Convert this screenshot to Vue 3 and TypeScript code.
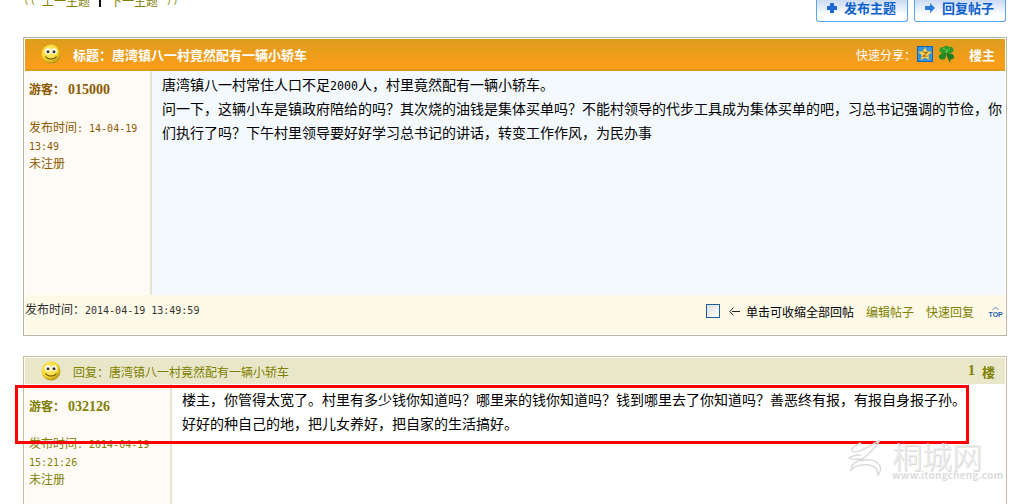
<script setup lang="ts">
const navLinks = ['上一主题', '下一主题']
const actions = [
  { label: '发布主题', icon: 'plus' },
  { label: '回复帖子', icon: 'arrow' },
]
</script>

<template>
  <div class="page">
    <div class="topbar">
      <div class="nav">
        <span class="chev">((</span>
        <a>{{ navLinks[0] }}</a>
        <span class="sep"></span>
        <a>{{ navLinks[1] }}</a>
        <span class="chev">))</span>
      </div>
      <div class="actions">
        <button v-for="a in actions" :key="a.label" class="btn">
          <svg width="12" height="12" viewBox="0 0 12 12">
            <path v-if="a.icon === 'plus'" d="M4 1h4v3h3v4H8v3H4V8H1V4h3z" fill="#1b68dc" />
            <path v-else d="M1 4h5V1l5 5-5 5V8H1z" fill="#2a7bdc" />
          </svg>
          <span>{{ a.label }}</span>
        </button>
      </div>
    </div>

    <section class="card first">
      <header class="head orange">
        <svg class="smile" width="20" height="20" viewBox="0 0 20 20">
          <defs>
            <radialGradient id="sm1" cx="42%" cy="38%" r="65%">
              <stop offset="0" stop-color="#fff58e" />
              <stop offset="0.65" stop-color="#f7d62c" />
              <stop offset="1" stop-color="#a98a14" />
            </radialGradient>
          </defs>
          <circle cx="10" cy="10" r="9.5" fill="url(#sm1)" />
          <ellipse cx="6.8" cy="7.2" rx="2.8" ry="3" fill="#fff" />
          <ellipse cx="13.2" cy="7.2" rx="2.8" ry="3" fill="#fff" />
          <circle cx="7" cy="7.8" r="1.5" fill="#3a3320" />
          <circle cx="13" cy="7.8" r="1.5" fill="#3a3320" />
          <path d="M4.5 12.5c2 3.4 9 3.4 11 0" fill="none" stroke="#6d5208" stroke-width="1.1" />
        </svg>
        <h2 class="title">标题：唐湾镇八一村竟然配有一辆小轿车</h2>
        <div class="share">
          <span class="share-label">快速分享：</span>
          <svg class="qz" width="16" height="16" viewBox="0 0 16 16">
            <rect x="0.5" y="0.5" width="15" height="15" fill="#2f93e6" stroke="#1565b4" />
            <path d="M8 1.2l2 4.2 4.6.6-3.4 3.1.9 4.6L8 11.5l-4.1 2.2.9-4.6L1.4 6l4.6-.6z" fill="#fbdc5a" stroke="#e0a92a" stroke-width="0.6" />
            <path d="M5.8 6.4h4.4L6 10.2h4.4" fill="none" stroke="#b5701a" stroke-width="1.2" />
          </svg>
          <svg width="17" height="18" viewBox="0 0 17 18">
            <path d="M8.5 8C5 9 2 8 1.5 5.5S4 1 6 2.5c0-2 4-2.5 4.8-.2C13 .8 16 3 15.5 5.5S12 9 8.5 8z" fill="#2f9a2a" />
            <path d="M8.5 8C5 7.5 1 9 .8 11.5s3 4 5 2.8c1.2 1 2.2-1.8 2.7-6.3z" fill="#248a24" />
            <path d="M8.5 8c3 .2 7.5 1 7.7 3.5s-3 4-5 2.8C9.5 14 8.8 11 8.5 8z" fill="#1f7f20" />
            <path d="M5 3.5c1.5-.5 3 1 3.5 4M11.5 3.5C10 4 9 5.5 8.5 8" fill="none" stroke="#6fd456" stroke-width="1" />
            <path d="M9 9l3 8" stroke="#2b6f1f" stroke-width="1.3" />
          </svg>
          <b class="floor">楼主</b>
        </div>
      </header>
      <div class="row tall">
        <aside class="side side-a">
          <div class="user">游客：<span class="num">015000</span></div>
          <div>发布时间<span class="mono">: 14-04-19 13:49</span></div>
          <div>未注册</div>
        </aside>
        <div class="content blue">
          <p>唐湾镇八一村常住人口不足<span class="mono14">2000</span>人，村里竟然配有一辆小轿车。</p>
          <p>问一下，这辆小车是镇政府陪给的吗？其次烧的油钱是集体买单吗？不能村领导的代步工具成为集体买单的吧，习总书记强调的节俭，你们执行了吗？下午村里领导要好好学习总书记的讲话，转变工作作风，为民办事</p>
        </div>
      </div>
      <footer class="foot">
        <div class="time">发布时间：<span class="mono">2014-04-19 13:49:59</span></div>
        <div class="tools">
          <i class="check"></i>
          <span class="hint">
            <svg width="11" height="9" viewBox="0 0 11 9">
              <path d="M4.5 .5L.8 4.5l3.7 4M3 4.5h8" fill="none" stroke="#222" stroke-width="1" />
            </svg>
            单击可收缩全部回帖
          </span>
          <a>编辑帖子</a>
          <a>快速回复</a>
          <svg class="top" width="15" height="11" viewBox="0 0 15 11">
            <path d="M4.5 4l3-3 3 3" fill="none" stroke="#5f8ec8" stroke-width="1" />
            <text x="0.5" y="10.5" font-size="7" font-weight="700" fill="#1c5fb0" font-family="Liberation Sans, sans-serif">TOP</text>
          </svg>
        </div>
      </footer>
    </section>

    <section class="card second">
      <header class="head olive">
        <svg class="smile" width="20" height="20" viewBox="0 0 20 20">
          <defs>
            <radialGradient id="sm2" cx="42%" cy="38%" r="65%">
              <stop offset="0" stop-color="#fff58e" />
              <stop offset="0.65" stop-color="#f7d62c" />
              <stop offset="1" stop-color="#a98a14" />
            </radialGradient>
          </defs>
          <circle cx="10" cy="10" r="9.5" fill="url(#sm2)" />
          <ellipse cx="6.8" cy="7.2" rx="2.8" ry="3" fill="#fff" />
          <ellipse cx="13.2" cy="7.2" rx="2.8" ry="3" fill="#fff" />
          <circle cx="7" cy="7.8" r="1.5" fill="#3a3320" />
          <circle cx="13" cy="7.8" r="1.5" fill="#3a3320" />
          <path d="M4.5 12.5c2 3.4 9 3.4 11 0" fill="none" stroke="#6d5208" stroke-width="1.1" />
        </svg>
        <h3 class="reply-title">回复：唐湾镇八一村竟然配有一辆小轿车</h3>
        <b class="reply-floor"><span class="num">1</span>楼</b>
      </header>
      <div class="row">
        <aside class="side side-b">
          <div class="user">游客：<span class="num">032126</span></div>
          <div>发布时间<span class="mono">: 2014-04-19 15:21:26</span></div>
          <div>未注册</div>
        </aside>
        <div class="content white">
          <p>楼主，你管得太宽了。村里有多少钱你知道吗？哪里来的钱你知道吗？钱到哪里去了你知道吗？善恶终有报，有报自身报子孙。</p>
          <p>好好的种自己的地，把儿女养好，把自家的生活搞好。</p>
        </div>
      </div>
    </section>

    <div class="redbox"></div>

    <div class="watermark">
      <svg width="40" height="40" viewBox="0 0 40 40">
        <path d="M15 3c-5 2-10 5-9 8 1 2 6 1 12-2 6-3 11-6 16-9-4 7-12 15-20 21 7-2 16-2 20 5 1 3 0 7-2 9 0-5-3-9-9-10-7-1-15 1-18 5 0-5 5-9 12-11-5 0-12 1-14-1 3-2 8-3 12-3" fill="none" stroke="#dadada" stroke-width="1.5" />
      </svg>
      <div class="wm-text">
        <div class="wm-big">桐城网</div>
        <div class="wm-url">www.itongcheng.com</div>
      </div>
    </div>
  </div>
</template>

<style>
html, body {
  background: #fff;
  overflow: hidden;
}
</style>

<style scoped>
.page {
  position: relative;
  width: 1013px;
  height: 504px;
  overflow: hidden;
  font-family: "Noto Sans CJK SC", "Liberation Sans", sans-serif;
  font-size: 12px;
  color: #000;
}
.topbar {
  display: flex;
  justify-content: space-between;
  height: 22px;
  padding: 0 7px 0 24px;
}
.nav {
  display: flex;
  gap: 8px;
  margin-top: -7px;
  height: 16px;
  line-height: 16px;
  color: #808000;
}
.nav a {
  color: #808000;
}
.chev {
  width: 10px;
  font-family: "Liberation Mono", monospace;
  font-size: 9px;
  letter-spacing: 1px;
}
.sep {
  width: 2px;
  height: 14px;
  margin: 0 1px;
  background: #111;
}
.actions {
  display: flex;
  gap: 6px;
  align-items: flex-end;
}
.btn {
  display: flex;
  align-items: center;
  gap: 6px;
  width: 92px;
  height: 26px;
  padding: 0 0 2px 9px;
  border: 1px solid #5aa5ef;
  border-top: 0;
  border-radius: 0 0 3px 3px;
  background: linear-gradient(#bdd0f0, #fff 75%);
  color: #0b60cc;
  font-family: inherit;
  font-size: 13px;
  font-weight: 700;
}
.card {
  margin: 0 6px 0 23px;
  border: 1px solid #bdb5a0;
  padding: 1px;
}
.first {
  margin-top: 15px;
  height: 299px;
  display: flex;
  flex-direction: column;
  box-sizing: border-box;
}
.second {
  margin-top: 20px;
  height: 200px;
  border-color: #c8bd9c;
}
.head {
  display: flex;
  align-items: center;
  padding-left: 16px;
}
.orange {
  height: 32px;
  background: linear-gradient(#dd9d1e, #fe9d19);
  color: #fff;
  border-bottom: 2px solid #dd9a1c;
  box-sizing: border-box;
}
.olive {
  height: 26px;
  background: #e9e7c9;
}
.smile {
  flex: none;
  margin-right: 12px;
}
.title {
  margin: 0;
  font-size: 13px;
  font-weight: 700;
}
.share {
  margin-left: auto;
  display: flex;
  align-items: center;
  padding-right: 10px;
}
.share-label {
  margin-right: 1px;
}
.qz {
  margin-right: 5px;
}
.floor {
  margin-left: 14px;
  font-size: 13px;
}
.reply-title {
  margin: 0;
  font-size: 12px;
  font-weight: 400;
  color: #808000;
}
.reply-floor {
  margin-left: auto;
  padding-right: 10px;
  font-size: 13px;
  color: #808000;
  display: flex;
  align-items: center;
  gap: 7px;
}
.row {
  display: flex;
  align-items: stretch;
}
.tall {
  flex: 1;
  min-height: 0;
}
.side {
  flex: none;
  box-sizing: border-box;
  padding: 8px 0 0 4px;
  background: #fefbf6;
  border-right: 2px solid #e8e4d4;
  color: #8c5a00;
  line-height: 18px;
}
.side-a {
  width: 127px;
}
.side-b {
  width: 147px;
  height: 120px;
  color: #808000;
  padding-top: 12px;
}
.user {
  font-weight: 700;
  margin-bottom: 19px;
  line-height: 20px;
  height: 20px;
}
.side-b .user {
  margin-bottom: 18px;
}
.num {
  font-family: "Liberation Serif", serif;
  font-weight: 700;
  font-size: 14px;
  line-height: 1;
}
.user .num {
  margin-left: 3px;
}
.mono {
  font-family: "DejaVu Sans Mono", monospace;
  font-size: 10px;
  line-height: 1;
}
.mono14 {
  font-family: "DejaVu Sans Mono", monospace;
  font-size: 11.6px;
  line-height: 1;
}
.content {
  flex: 1;
  min-width: 0;
  box-sizing: border-box;
  padding: 1px 3px 0 10px;
  font-size: 14px;
  line-height: 24px;
}
.blue {
  background: #f4f9fe;
}
.white {
  background: #fff;
  padding-top: 3px;
}
.content p {
  margin: 0;
}
.foot {
  flex: none;
  display: flex;
  justify-content: space-between;
  height: 39px;
  padding-top: 6px;
  box-sizing: border-box;
  background: #fdfae8;
}
.time {
  margin-top: -1px;
  color: #333;
}
.tools {
  display: flex;
  align-items: center;
  gap: 12px;
  height: 20px;
  padding-right: 2px;
}
.tools a {
  color: #808000;
}
.check {
  width: 12px;
  height: 12px;
  margin-right: -3px;
  border: 1px solid #1f5f99;
  background: linear-gradient(135deg, #dedede, #fff);
}
.hint {
  display: flex;
  align-items: center;
  gap: 6px;
}
.top {
  margin-left: 2px;
}
.redbox {
  position: absolute;
  left: 15px;
  top: 385px;
  width: 948px;
  height: 53px;
  border: 3px solid #f00;
}
.watermark {
  position: absolute;
  left: 846px;
  top: 440px;
  display: flex;
  gap: 6px;
  color: #ececec;
}
.wm-big {
  font-size: 30px;
  line-height: 30px;
  font-weight: 300;
  text-shadow: 1px 1px 0 #d9d9d9;
}
.wm-url {
  font-size: 10px;
  line-height: 10px;
  font-weight: 700;
  color: #dcdcdc;
  letter-spacing: 0.2px;
}
</style>
